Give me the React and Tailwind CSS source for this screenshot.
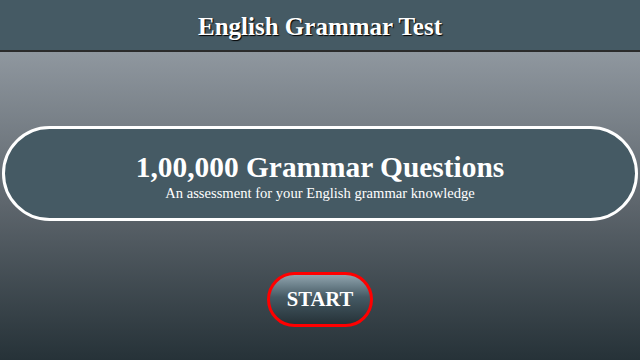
export default function App() {
  return (
    <div className="min-h-screen w-full flex flex-col font-[family-name:'Liberation_Serif',serif] bg-[linear-gradient(to_bottom,#a0a8b0_0px,#5f676e_200px,#263238_360px)]">
      <header className="h-[52px] bg-[#455a64] border-b-2 border-[#2b2b2b] flex items-center justify-center shadow-[2px_0_0_#2b2b2b]">
        <h1 className="text-[25px] font-bold text-white leading-none mt-[2px] [text-shadow:1px_1px_1px_#000]">
          English Grammar Test
        </h1>
      </header>

      <div className="px-[2px] pt-[74px]">
        <div className="h-[95px] rounded-full border-[3px] border-white bg-[#455a64] flex flex-col items-center justify-center text-white">
          <h2 className="text-[29.4px] font-bold leading-none mt-[6px]">1,00,000 Grammar Questions</h2>
          <p className="text-[14.6px] leading-none mt-[4px]">An assessment for your English grammar knowledge</p>
        </div>
      </div>

      <div className="flex justify-center pt-[51px]">
        <button
          type="button"
          className="w-[106px] h-[55px] rounded-full border-[3px] border-[#ff0000] bg-[linear-gradient(to_bottom,#90a4ae,#455a64_45%,#263238)] text-white text-[20.6px] font-bold flex items-center justify-center"
        >
          START
        </button>
      </div>
    </div>
  )
}
